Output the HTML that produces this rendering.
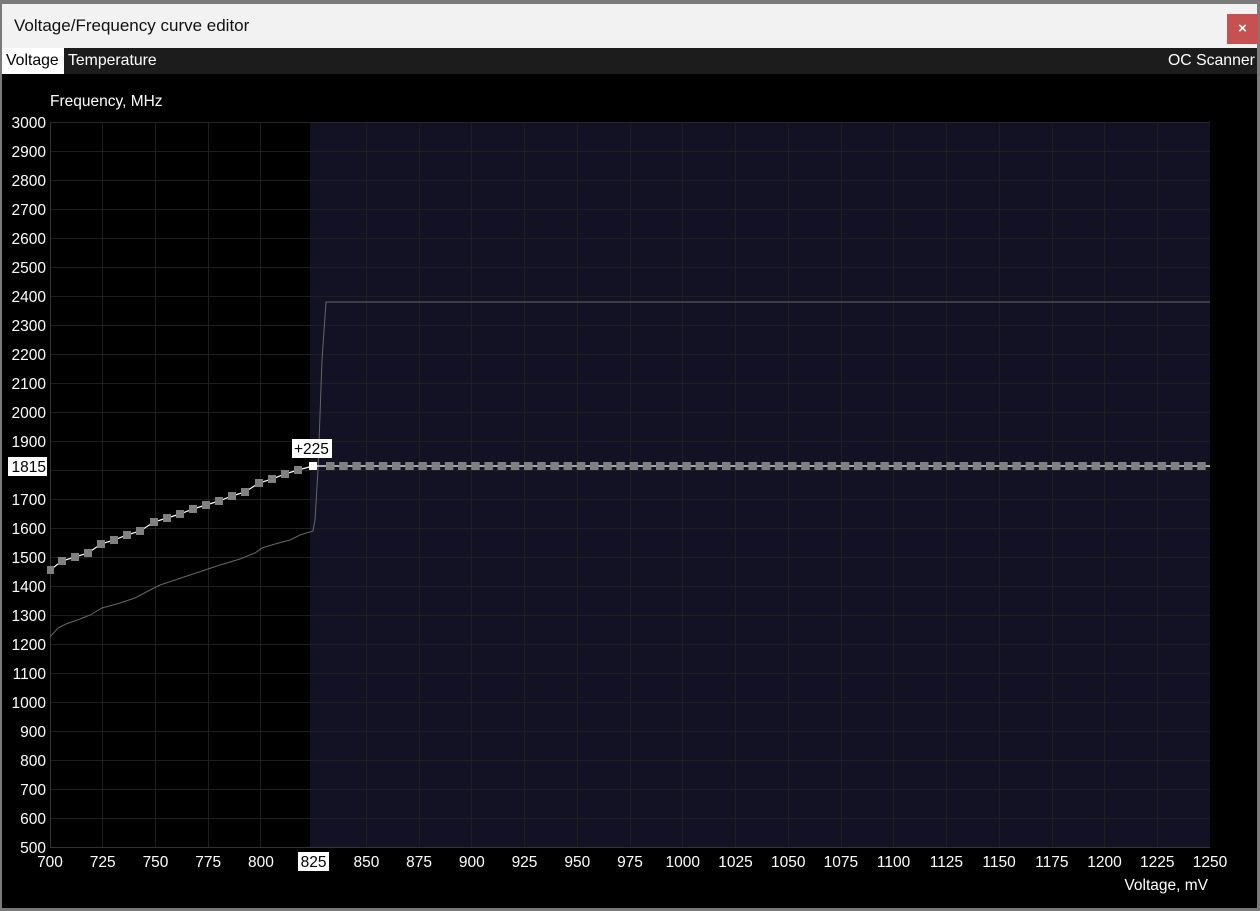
<!DOCTYPE html>
<html><head><meta charset="utf-8"><style>
body{margin:0;width:1260px;height:911px;background:#7a7a7a;overflow:hidden;font-family:"Liberation Sans",sans-serif;}
#win{position:absolute;left:2px;top:4px;width:1255px;height:904px;background:#000;}
#title{position:absolute;left:0;top:0;width:1255px;height:44px;background:#f2f2f2;}
#title span{position:absolute;left:12px;top:12px;font-size:17px;color:#111;}
#close{position:absolute;left:1225px;top:10px;width:31px;height:30px;background:#c75050;color:#fff;font-size:15px;font-weight:bold;text-align:center;line-height:30px;}
#tabs{position:absolute;left:0;top:44px;width:1255px;height:26px;background:#1c1c1c;font-size:15.8px;color:#fff;}
#tabs .t{position:absolute;top:4px;}
svg{position:absolute;left:0;top:0;}
</style></head><body>
<div id="win">
<div id="title"><span>Voltage/Frequency curve editor</span></div>
<div id="close">×</div>
<div id="tabs">
<div style="position:absolute;left:0;top:0;width:62px;height:26px;background:#fff;"></div>
<span class="t" style="left:4px;color:#000">Voltage</span>
<span class="t" style="left:66px">Temperature</span>
<span class="t" style="left:1166px">OC Scanner</span>
</div>
</div>
<svg width="1260" height="911" xmlns="http://www.w3.org/2000/svg" font-family="Liberation Sans, sans-serif" font-size="15.5" fill="#fff">
<defs>
<pattern id="sq" x="326" y="462" width="13.2" height="8" patternUnits="userSpaceOnUse"><rect x="0" y="0" width="8.5" height="8" fill="#808080"/></pattern>
</defs>
<rect x="310" y="122" width="900" height="725" fill="#131224"/>
<g stroke="#1f1f1f" stroke-width="1">
<path d="M50 151.5H1210M50 180.5H1210M50 209.5H1210M50 238.5H1210M50 267.5H1210M50 296.5H1210M50 325.5H1210M50 354.5H1210M50 383.5H1210M50 412.5H1210M50 441.5H1210M50 470.5H1210M50 499.5H1210M50 528.5H1210M50 557.5H1210M50 586.5H1210M50 615.5H1210M50 644.5H1210M50 673.5H1210M50 702.5H1210M50 731.5H1210M50 760.5H1210M50 789.5H1210M50 818.5H1210"/>
<path d="M102.5 122V847M155.5 122V847M208.5 122V847M260.5 122V847M366.5 122V847M419.5 122V847M471.5 122V847M524.5 122V847M577.5 122V847M630.5 122V847M682.5 122V847M735.5 122V847M788.5 122V847M841.5 122V847M893.5 122V847M946.5 122V847M999.5 122V847M1052.5 122V847M1104.5 122V847M1157.5 122V847"/>
</g>
<path d="M50 122.5H1210" stroke="#262626"/>
<path d="M50.5 122V847.5H1210" stroke="#333" fill="none"/>
<polyline fill="none" stroke="#666" stroke-width="1" points="50,637 58,628 66,624 80,619 90,615 102,608 120,603 135,598 150,590 160,585 175,580 190,575 205,570 220,565 240,559 255,553 262,548 275,544 290,540 300,535 313,531 315,520 318,470 322,360 326,302 1210,302"/>
<polyline fill="none" stroke="#fff" stroke-width="1.2" points="50,570 62,561 75,557 88,553 101,544 114,540 127,535 140,531 154,522 167,518 180,514 193,509 206,505 219,501 232,496 245,492 259,483 272,479 285,474 298,470 313,466 1210,466"/>
<g fill="#808080">
<rect x="47" y="566" width="7" height="8"/><rect x="58" y="557" width="8" height="8"/><rect x="71" y="553" width="8" height="8"/><rect x="84" y="549" width="8" height="8"/><rect x="97" y="540" width="8" height="8"/><rect x="110" y="536" width="8" height="8"/><rect x="123" y="531" width="8" height="8"/><rect x="136" y="527" width="8" height="8"/><rect x="150" y="518" width="8" height="8"/><rect x="163" y="514" width="8" height="8"/><rect x="176" y="510" width="8" height="8"/><rect x="189" y="505" width="8" height="8"/><rect x="202" y="501" width="8" height="8"/><rect x="215" y="497" width="8" height="8"/><rect x="228" y="492" width="8" height="8"/><rect x="241" y="488" width="8" height="8"/><rect x="255" y="479" width="8" height="8"/><rect x="268" y="475" width="8" height="8"/><rect x="281" y="470" width="8" height="8"/><rect x="294" y="466" width="8" height="8"/>
</g>
<rect x="326" y="462" width="880" height="8" fill="url(#sq)"/>
<rect x="309" y="462" width="8" height="8" fill="#fff"/>
<rect x="292" y="439" width="40" height="19" fill="#fff"/>
<text x="294" y="454" fill="#000">+225</text>
<text x="50" y="106" font-size="15.5">Frequency, MHz</text>
<g text-anchor="end">
<text x="46" y="128">3000</text><text x="46" y="157">2900</text><text x="46" y="186">2800</text><text x="46" y="215">2700</text><text x="46" y="244">2600</text><text x="46" y="273">2500</text><text x="46" y="302">2400</text><text x="46" y="331">2300</text><text x="46" y="360">2200</text><text x="46" y="389">2100</text><text x="46" y="418">2000</text><text x="46" y="447">1900</text><text x="46" y="505">1700</text><text x="46" y="534">1600</text><text x="46" y="563">1500</text><text x="46" y="592">1400</text><text x="46" y="621">1300</text><text x="46" y="650">1200</text><text x="46" y="679">1100</text><text x="46" y="708">1000</text><text x="46" y="737">900</text><text x="46" y="766">800</text><text x="46" y="795">700</text><text x="46" y="824">600</text><text x="46" y="853">500</text>
</g>
<rect x="8" y="457" width="39" height="19" fill="#fff"/>
<text x="46" y="472" text-anchor="end" fill="#000">1815</text>
<rect x="298" y="852" width="31" height="19" fill="#fff"/>
<g text-anchor="middle">
<text x="50" y="867">700</text><text x="102.7" y="867">725</text><text x="155.5" y="867">750</text><text x="208.2" y="867">775</text><text x="260.9" y="867">800</text><text x="313.6" y="867" fill="#000">825</text><text x="366.4" y="867">850</text><text x="419.1" y="867">875</text><text x="471.8" y="867">900</text><text x="524.5" y="867">925</text><text x="577.3" y="867">950</text><text x="630" y="867">975</text><text x="682.7" y="867">1000</text><text x="735.5" y="867">1025</text><text x="788.2" y="867">1050</text><text x="840.9" y="867">1075</text><text x="893.6" y="867">1100</text><text x="946.4" y="867">1125</text><text x="999.1" y="867">1150</text><text x="1051.8" y="867">1175</text><text x="1104.5" y="867">1200</text><text x="1157.3" y="867">1225</text><text x="1210" y="867">1250</text>
</g>
<text x="1208" y="890" text-anchor="end" font-size="15.5">Voltage, mV</text>
</svg>
</body></html>
